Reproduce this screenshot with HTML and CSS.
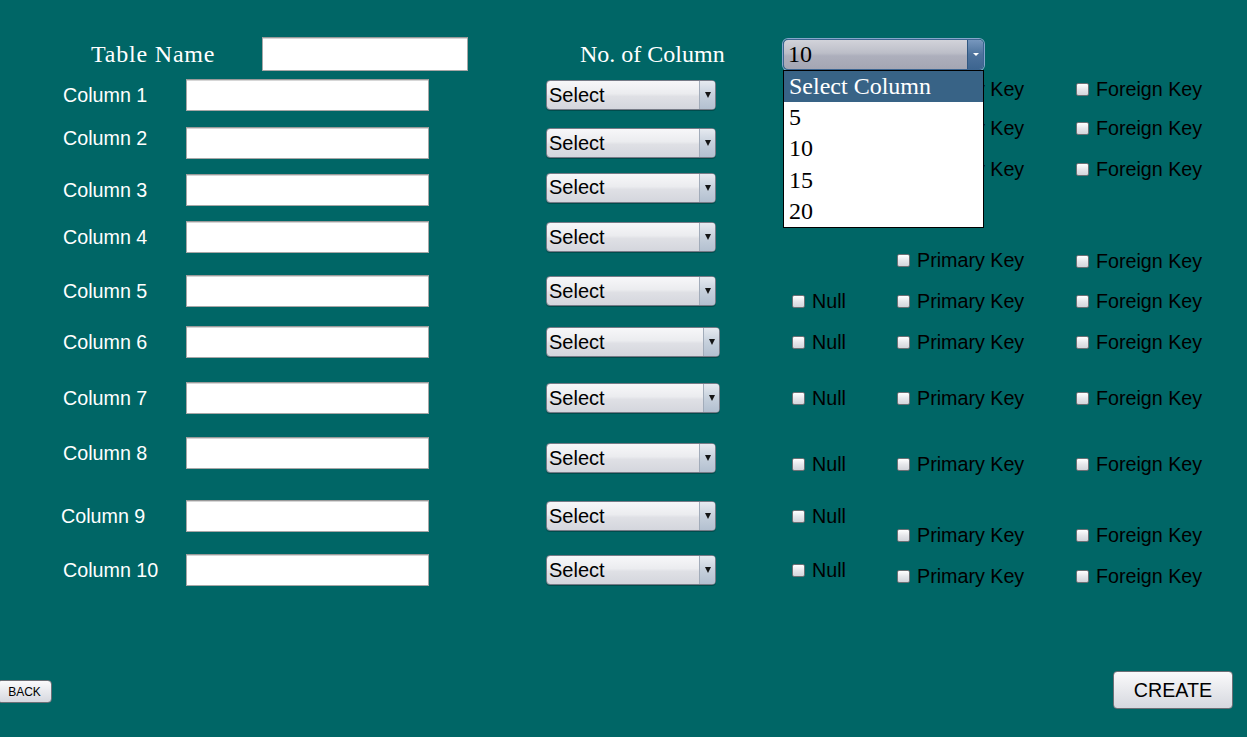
FILE: index.html
```html
<!DOCTYPE html>
<html lang="en">
<head>
<meta charset="utf-8">
<title>Create Table</title>
<link rel="stylesheet" href="styles.css">
</head>
<body>
<div class="page">
  <header class="header">
    <label class="head-label name-label">Table Name</label>
    <input class="text-input name-input" type="text">
    <label class="head-label count-label">No. of Column</label>
    <div class="count-select">
      <span class="count-value">10</span>
      <span class="count-arrow"><span class="tri-white"></span></span>
      <ul class="count-list">
        <li class="active">Select Column</li>
        <li>5</li>
        <li>10</li>
        <li>15</li>
        <li>20</li>
      </ul>
    </div>
  </header>

  <main class="main">
    <div class="fields">
      <div class="field-row">
        <span class="col-label">Column 1</span>
        <input class="text-input col-input" type="text">
        <div class="type-select"><span class="type-value">Select</span><span class="type-arrow"><span class="tri"></span></span></div>
      </div>
      <div class="field-row">
        <span class="col-label raised">Column 2</span>
        <input class="text-input col-input" type="text">
        <div class="type-select"><span class="type-value">Select</span><span class="type-arrow"><span class="tri"></span></span></div>
      </div>
      <div class="field-row">
        <span class="col-label">Column 3</span>
        <input class="text-input col-input" type="text">
        <div class="type-select raised"><span class="type-value">Select</span><span class="type-arrow"><span class="tri"></span></span></div>
      </div>
      <div class="field-row">
        <span class="col-label">Column 4</span>
        <input class="text-input col-input" type="text">
        <div class="type-select"><span class="type-value">Select</span><span class="type-arrow"><span class="tri"></span></span></div>
      </div>
      <div class="field-row">
        <span class="col-label">Column 5</span>
        <input class="text-input col-input" type="text">
        <div class="type-select"><span class="type-value">Select</span><span class="type-arrow"><span class="tri"></span></span></div>
      </div>
      <div class="field-row">
        <span class="col-label">Column 6</span>
        <input class="text-input col-input" type="text">
        <div class="type-select wide"><span class="type-value">Select</span><span class="type-arrow"><span class="tri"></span></span></div>
      </div>
      <div class="field-row">
        <span class="col-label">Column 7</span>
        <input class="text-input col-input" type="text">
        <div class="type-select wide"><span class="type-value">Select</span><span class="type-arrow"><span class="tri"></span></span></div>
      </div>
      <div class="field-row">
        <span class="col-label">Column 8</span>
        <input class="text-input col-input" type="text">
        <div class="type-select lowered"><span class="type-value">Select</span><span class="type-arrow"><span class="tri"></span></span></div>
      </div>
      <div class="field-row">
        <span class="col-label shifted">Column 9</span>
        <input class="text-input col-input" type="text">
        <div class="type-select"><span class="type-value">Select</span><span class="type-arrow"><span class="tri"></span></span></div>
      </div>
      <div class="field-row">
        <span class="col-label">Column 10</span>
        <input class="text-input col-input" type="text">
        <div class="type-select"><span class="type-value">Select</span><span class="type-arrow"><span class="tri"></span></span></div>
      </div>
    </div>

    <div class="flags">
      <div class="flag-line">
        <span></span>
        <label class="flag"><input type="checkbox"> Primary Key</label>
        <label class="flag"><input type="checkbox"> Foreign Key</label>
      </div>
      <div class="flag-line">
        <span></span>
        <label class="flag"><input type="checkbox"> Primary Key</label>
        <label class="flag"><input type="checkbox"> Foreign Key</label>
      </div>
      <div class="flag-line">
        <span></span>
        <label class="flag"><input type="checkbox"> Primary Key</label>
        <label class="flag"><input type="checkbox"> Foreign Key</label>
      </div>
      <div class="flag-line">
        <span></span>
        <label class="flag"><input type="checkbox"> Primary Key</label>
        <label class="flag dip1"><input type="checkbox"> Foreign Key</label>
      </div>
      <div class="flag-line">
        <label class="flag"><input type="checkbox"> Null</label>
        <label class="flag"><input type="checkbox"> Primary Key</label>
        <label class="flag"><input type="checkbox"> Foreign Key</label>
      </div>
      <div class="flag-line">
        <label class="flag"><input type="checkbox"> Null</label>
        <label class="flag"><input type="checkbox"> Primary Key</label>
        <label class="flag"><input type="checkbox"> Foreign Key</label>
      </div>
      <div class="flag-line">
        <label class="flag"><input type="checkbox"> Null</label>
        <label class="flag"><input type="checkbox"> Primary Key</label>
        <label class="flag"><input type="checkbox"> Foreign Key</label>
      </div>
      <div class="flag-line">
        <label class="flag"><input type="checkbox"> Null</label>
        <label class="flag"><input type="checkbox"> Primary Key</label>
        <label class="flag"><input type="checkbox"> Foreign Key</label>
      </div>
      <div class="flag-line">
        <label class="flag"><input type="checkbox"> Null</label>
      </div>
      <div class="flag-line">
        <span></span>
        <label class="flag"><input type="checkbox"> Primary Key</label>
        <label class="flag"><input type="checkbox"> Foreign Key</label>
      </div>
      <div class="flag-line">
        <label class="flag"><input type="checkbox"> Null</label>
        <label class="flag dip"><input type="checkbox"> Primary Key</label>
        <label class="flag dip"><input type="checkbox"> Foreign Key</label>
      </div>
    </div>
  </main>

  <footer class="footer">
    <button class="btn back" type="button">BACK</button>
    <button class="btn create" type="button">CREATE</button>
  </footer>
</div>
</body>
</html>
```

FILE: styles.css
```css
* {
  box-sizing: border-box;
}

html,
body {
  margin: 0;
  height: 100%;
}

body {
  background: #006666;
  font-family: "Liberation Sans", Arial, sans-serif;
  overflow: hidden;
}

.page {
  width: 1247px;
  height: 737px;
  display: flex;
  flex-direction: column;
}

/* ---------- header ---------- */
.header {
  display: flex;
  align-items: center;
  height: 34px;
  margin-top: 37px;
  padding-left: 91px;
}

.head-label {
  font-family: "Liberation Serif", "Times New Roman", serif;
  font-size: 24px;
  color: #ffffff;
  flex: none;
}

.name-label {
  width: 171px;
  letter-spacing: 0.8px;
}

.name-input {
  width: 206px;
  height: 34px;
}

.count-label {
  margin-left: 112px;
  width: 203px;
}

.text-input {
  margin: 0;
  padding: 0 4px;
  background: #ffffff;
  border: 1px solid #a7a7a7;
  border-top-color: #9a9a9a;
  box-shadow: inset 0 1px 0 #d6d6d6;
  font-family: "Liberation Sans", Arial, sans-serif;
  font-size: 18px;
  outline: none;
  flex: none;
}

.count-select {
  position: relative;
  width: 201px;
  height: 31px;
  display: flex;
  align-items: center;
  border: 1px solid #3c6591;
  border-radius: 5px;
  box-shadow: 0 0 0 1px #86a7cb;
  background: linear-gradient(#d2d3da, #bcbec8 45%, #adafbc 55%, #a4a6b3);
  flex: none;
}

.count-value {
  flex: 1;
  padding-left: 4px;
  font-family: "Liberation Serif", "Times New Roman", serif;
  font-size: 24px;
  line-height: 1;
  color: #000000;
}

.count-arrow {
  width: 16px;
  align-self: stretch;
  display: flex;
  align-items: center;
  justify-content: center;
  border-left: 1px solid #2f5680;
  border-radius: 0 4px 4px 0;
  background: linear-gradient(#7797bd, #4d729c 50%, #3d6590);
}

.tri-white {
  width: 0;
  height: 0;
  border-left: 3px solid transparent;
  border-right: 3px solid transparent;
  border-top: 3px solid #ffffff;
}

.count-list {
  position: absolute;
  top: calc(100% + 1px);
  left: -1px;
  width: 201px;
  margin: 0;
  padding: 0;
  list-style: none;
  background: #ffffff;
  border: 1px solid #000000;
  z-index: 5;
}

.count-list li {
  height: 31.4px;
  display: flex;
  align-items: center;
  padding-left: 5px;
  font-family: "Liberation Serif", "Times New Roman", serif;
  font-size: 24px;
  color: #000000;
}

.count-list li.active {
  background: #386386;
  color: #ffffff;
}

/* ---------- main ---------- */
.main {
  display: flex;
  margin-top: 8px;
}

.fields {
  width: 792px;
  flex: none;
  padding-left: 63px;
  display: grid;
  grid-template-rows: 48px 47px 47px 54px 51px 56px 55px 63px 54px 32px;
}

.field-row {
  display: flex;
  align-items: center;
  height: 32px;
}

.col-label {
  width: 123px;
  flex: none;
  color: #ffffff;
  font-size: 19.7px;
  white-space: nowrap;
}

.col-label.raised {
  margin-bottom: 10px;
}

.col-label.shifted {
  text-indent: -2px;
}

.col-input {
  width: 243px;
  height: 32px;
}

.type-select {
  margin-left: 117px;
  width: 170px;
  height: 30px;
  flex: none;
  display: flex;
  align-items: center;
  overflow: hidden;
  border: 1px solid #777b87;
  border-radius: 4px;
  background: linear-gradient(#f7f7f9, #ebecef 45%, #dfe0e5 55%, #d4d6dd);
  box-shadow: 0 1px 0 rgba(0, 0, 0, 0.25);
}

.type-select.wide {
  width: 174px;
}

.type-select.raised {
  margin-bottom: 5px;
}

.type-select.lowered {
  margin-top: 10px;
}

.type-value {
  flex: 1;
  padding-left: 2px;
  font-size: 20px;
  color: #000000;
}

.type-arrow {
  width: 16px;
  align-self: stretch;
  display: flex;
  align-items: center;
  justify-content: center;
  border-left: 1px solid #a2acba;
  background: linear-gradient(#e6eaf0, #c6d0dc 50%, #b3c0d0);
}

.tri {
  width: 0;
  height: 0;
  border-left: 3.5px solid transparent;
  border-right: 3.5px solid transparent;
  border-top: 6px solid #151515;
}

/* ---------- flags ---------- */
.flags {
  display: grid;
  grid-template-rows: 39px 41px 91px 41px 41px 56px 66px 52px 19px 35px 26px;
}

.flag-line {
  display: grid;
  grid-template-columns: 105px 179px auto;
  align-items: start;
}

.flag {
  display: flex;
  align-items: center;
  gap: 7px;
  height: 20px;
  font-size: 19.7px;
  color: #000000;
  white-space: nowrap;
}

.flag.dip {
  margin-top: 6px;
}

.flag.dip1 {
  margin-top: 1px;
}

.flag input {
  appearance: none;
  -webkit-appearance: none;
  margin: 0;
  width: 13px;
  height: 13px;
  flex: none;
  border: 1px solid #6c7075;
  border-radius: 2px;
  background: linear-gradient(#ffffff, #e6e7eb 50%, #d3d5db);
}

/* ---------- footer ---------- */
.footer {
  display: flex;
  justify-content: space-between;
  align-items: flex-start;
  margin-top: 85px;
  padding-right: 14px;
}

.btn {
  margin: 0;
  padding: 0;
  font-family: "Liberation Sans", Arial, sans-serif;
  color: #000000;
  border: 1px solid #6c6f76;
  border-radius: 4px;
  background: linear-gradient(#fafafb, #e8e9ed 50%, #d6d8df);
}

.back {
  margin-top: 9px;
  margin-left: -3px;
  width: 55px;
  height: 23px;
  font-size: 12px;
}

.create {
  width: 120px;
  height: 38px;
  font-size: 19.7px;
}
```
